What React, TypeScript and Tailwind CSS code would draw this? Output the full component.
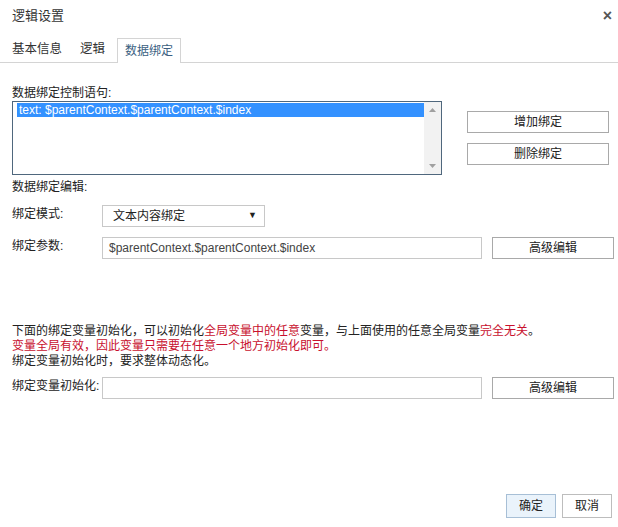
import React from 'react';

const font = { fontFamily: '"Liberation Sans", "Noto Sans CJK SC", sans-serif' };

function Btn({ children, className = '' }: { children: React.ReactNode; className?: string }) {
  return (
    <button
      type="button"
      className={`shrink-0 h-[22px] border border-[#a9a9a9] bg-white text-[12px] text-[#222] leading-none flex items-center justify-center ${className}`}
    >
      {children}
    </button>
  );
}

export default function App() {
  return (
    <div className="w-[618px] h-[527px] bg-white flex flex-col text-[12px] text-[#222]" style={font}>
      {/* header */}
      <div className="h-[32px] flex items-center justify-between pl-[12px] pr-[6px]">
        <span className="text-[13px] text-[#333]">逻辑设置</span>
        <span className="text-[16px] font-bold text-[#555] leading-none">×</span>
      </div>

      {/* tabs */}
      <div className="mt-[6px] h-[25px] flex items-end border-b border-[#d4d4d4] pl-[12px]">
        <div className="h-[25px] flex items-center text-[12.5px] text-[#333]">基本信息</div>
        <div className="h-[25px] ml-[18px] flex items-center text-[12.5px] text-[#333]">逻辑</div>
        <div className="h-[25px] ml-[12px] px-[7px] flex items-center text-[12px] text-[#3b5f82] border border-b-0 border-[#d4d4d4] bg-white -mb-px">
          数据绑定
        </div>
      </div>

      {/* content */}
      <div className="px-[12px] pt-[23px]">
        <div className="h-[15px] leading-[15px]">数据绑定控制语句:</div>
        <div className="flex">
          <div className="shrink-0 w-[430px] h-[74px] border border-[#4f677d] flex">
            <div className="flex-1 pt-[1px] pl-[4px]">
              <div className="h-[14px] bg-[#3391ff] text-white leading-[14px] pl-[2px]">
                text: $parentContext.$parentContext.$index
              </div>
            </div>
            <div className="w-[17px] bg-[#f2f2f2] flex flex-col items-center justify-between py-[6px]">
              <svg width="7" height="4" viewBox="0 0 7 4"><path d="M0 4 L3.5 0 L7 4 Z" fill="#a0a0a0" /></svg>
              <svg width="7" height="4" viewBox="0 0 7 4"><path d="M0 0 L3.5 4 L7 0 Z" fill="#a0a0a0" /></svg>
            </div>
          </div>
          <div className="shrink-0 ml-[25px] pt-[10px] flex flex-col gap-[10px]">
            <Btn className="w-[142px]">增加绑定</Btn>
            <Btn className="w-[142px]">删除绑定</Btn>
          </div>
        </div>

        <div className="mt-[5px] h-[14px] leading-[14px]">数据绑定编辑:</div>

        <div className="mt-[11px] flex items-center">
          <div className="shrink-0 w-[90px] -mt-[4px]">绑定模式:</div>
          <div className="shrink-0 w-[163px] h-[22px] border border-[#c8c8c8] flex items-center justify-between pl-[10px] pr-[7px] text-[12px]">
            <span>文本内容绑定</span>
            <span className="text-[9px]">▼</span>
          </div>
        </div>

        <div className="mt-[10px] flex items-center">
          <div className="shrink-0 w-[90px] -mt-[4px]">绑定参数:</div>
          <div className="shrink-0 w-[380px] h-[22px] border border-[#c8c8c8] flex items-center pl-[6px] text-[#444]">
            $parentContext.$parentContext.$index
          </div>
          <Btn className="ml-[10px] w-[122px]">高级编辑</Btn>
        </div>

        <div className="mt-[65px] leading-[15px]">
          <div>
            下面的绑定变量初始化，可以初始化<span className="text-[#c8102e]">全局变量中的任意</span>变量，与上面使用的任意全局变量
            <span className="text-[#c8102e]">完全无关</span>。
          </div>
          <div className="text-[#c8102e]">变量全局有效，因此变量只需要在任意一个地方初始化即可。</div>
          <div>绑定变量初始化时，要求整体动态化。</div>
        </div>

        <div className="mt-[8px] flex items-center">
          <div className="shrink-0 w-[90px] -mt-[4px]">绑定变量初始化:</div>
          <div className="shrink-0 w-[380px] h-[22px] border border-[#c8c8c8]" />
          <Btn className="ml-[10px] w-[122px]">高级编辑</Btn>
        </div>
      </div>

      {/* footer */}
      <div className="mt-auto pb-[9px] pr-[6px] flex justify-end gap-[6px]">
        <button type="button" className="w-[50px] h-[24px] border border-[#a7bfd6] bg-[#eaf3fb] text-[12px] text-[#222]">确定</button>
        <button type="button" className="w-[50px] h-[24px] border border-[#bdbdbd] bg-white text-[12px] text-[#222]">取消</button>
      </div>
    </div>
  );
}
